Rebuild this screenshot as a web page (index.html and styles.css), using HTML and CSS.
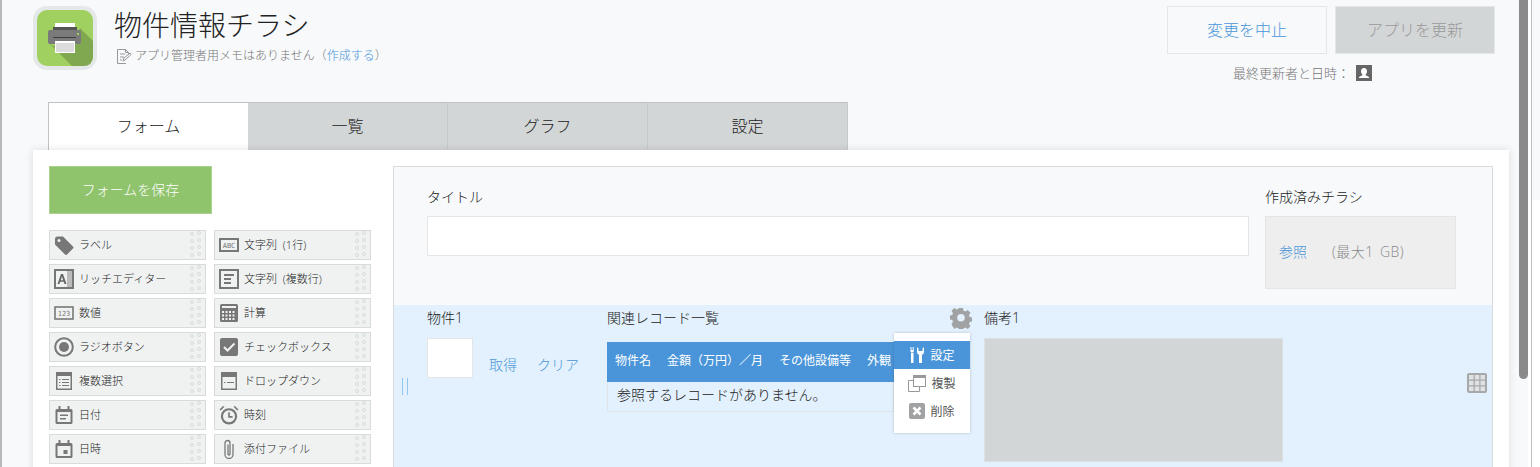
FILE: index.html
```html
<!doctype html>
<html lang="ja">
<head>
	<meta charset="utf-8">
	<title>物件情報チラシ</title>
	<link rel="stylesheet" href="styles.css">
</head>
<body>
	<svg class="defs" width="0" height="0">
		<symbol id="grip" viewBox="0 0 14 30">
			<g fill="none" stroke="#d9dcdc" stroke-width="1">
				<circle cx="3" cy="4" r="1.5"/><circle cx="10" cy="3" r="1.5"/>
				<circle cx="3" cy="11" r="1.5"/><circle cx="10" cy="10" r="1.5"/>
				<circle cx="3" cy="18" r="1.5"/><circle cx="10" cy="17" r="1.5"/>
				<circle cx="3" cy="25" r="1.5"/><circle cx="10" cy="24" r="1.5"/>
			</g>
		</symbol>
	</svg>

	<header class="app-header">
		<div class="app-icon">
			<svg viewBox="0 0 56 56" width="56" height="56">
				<rect width="56" height="56" rx="10" fill="#a0d060"/>
				<path d="M11 32 L35 56 H46 Q56 56 56 46 V31 L43 18 L38 30 L16 36 Z" fill="#80a850"/>
				<rect x="18" y="13" width="20" height="8" fill="#fff"/>
				<rect x="16" y="17" width="24" height="3" fill="#555"/>
				<rect x="11" y="20" width="33" height="14" rx="2" fill="#7a7a7a"/>
				<rect x="16" y="27" width="23" height="1" fill="#3f3f3f"/>
				<rect x="40" y="23" width="2" height="2" fill="#a0d060"/>
				<rect x="18" y="31" width="20" height="12" fill="#fff"/>
				<rect x="19" y="33" width="18" height="9" fill="#dcdcdc"/>
			</svg>
		</div>
		<div class="app-title">
			<h1>物件情報チラシ</h1>
			<p class="app-memo">
				<svg width="16" height="16" viewBox="0 0 16 16" fill="none" stroke="#999"><path d="M10 15.500H1.500V1.500h8l3 3V7"/><path d="M9.500 1.500v3h3M4 6h5M4 9h4M4 12h2"/><path d="M7 13l1-3 6-5 1 1.500-6 5.500z"/></svg>
				アプリ管理者用メモはありません（<a>作成する</a>）
			</p>
		</div>
		<div class="app-actions">
			<div class="action-buttons">
				<button class="btn-cancel">変更を中止</button>
				<button class="btn-update">アプリを更新</button>
			</div>
			<p class="app-updated">最終更新者と日時：
				<svg width="16" height="16" viewBox="0 0 16 16"><rect width="16" height="16" fill="#666"/><path d="M8 3c-2 0-3 1.400-3 3.200 0 1.300.5 2.300 1.300 3v1L3 12v1h10v-1l-3.300-1.800v-1c.8-.7 1.300-1.700 1.300-3C11 4.400 10 3 8 3z" fill="#fff"/></svg>
			</p>
		</div>
	</header>

	<nav class="tabs">
		<a class="tab tab-active">フォーム</a>
		<a class="tab">一覧</a>
		<a class="tab">グラフ</a>
		<a class="tab">設定</a>
	</nav>

	<main class="panel">
		<aside class="palette">
			<button class="btn-save">フォームを保存</button>
			<ul class="palette-list">
				<li class="palette-item"><svg class="palette-icon" viewBox="0 0 20 20"><path d="M1 4a2.500 2.500 0 0 1 2.500-2.500H9L19 11.500a1.500 1.500 0 0 1 0 2l-6 6a1.500 1.500 0 0 1-2 0L1 9.500z" fill="#777"/><circle cx="5" cy="5.500" r="1.500" fill="#f0f2f2"/></svg>ラベル<svg class="grip"><use href="#grip"/></svg></li>
				<li class="palette-item"><svg class="palette-icon" viewBox="0 0 20 20"><rect x="1" y="4" width="18" height="12" fill="none" stroke="#777" stroke-width="2"/><text x="10" y="13" text-anchor="middle" class="icon-text">ABC</text></svg>文字列 (1行)<svg class="grip"><use href="#grip"/></svg></li>
				<li class="palette-item"><svg class="palette-icon" viewBox="0 0 20 20"><rect x="1" y="1" width="18" height="18" fill="none" stroke="#777" stroke-width="2"/><rect x="13" y="2" width="5" height="16" fill="#bbb"/><path d="M3.500 15L7 5h2l3.500 10h-2l-.7-2.200H6.200L5.500 15zM6.800 11.300h2.400L8 7.500z" fill="#666"/></svg>リッチエディター<svg class="grip"><use href="#grip"/></svg></li>
				<li class="palette-item"><svg class="palette-icon" viewBox="0 0 20 20"><rect x="1" y="1" width="18" height="18" fill="none" stroke="#777" stroke-width="2"/><path d="M5 5h10v2H5zM5 9h7v2H5zM5 13h7v2H5z" fill="#777"/></svg>文字列 (複数行)<svg class="grip"><use href="#grip"/></svg></li>
				<li class="palette-item"><svg class="palette-icon" viewBox="0 0 20 20"><rect x="1" y="4" width="18" height="12" fill="none" stroke="#777" stroke-width="1.600"/><text x="10" y="13" text-anchor="middle" class="icon-text">123</text></svg>数値<svg class="grip"><use href="#grip"/></svg></li>
				<li class="palette-item"><svg class="palette-icon" viewBox="0 0 20 20"><rect x="1" y="1" width="18" height="18" rx="1.500" fill="#777"/><rect x="3" y="3" width="14" height="2" fill="#f0f2f2"/><path d="M3 8h2v2H3zM6.500 8h2v2h-2zM10 8h2v2h-2zM13.500 8h2v2h-2zM3 11.500h2v2H3zM6.500 11.500h2v2h-2zM10 11.500h2v2h-2zM13.500 11.500h2v2h-2zM3 15h2v2H3zM6.500 15h2v2h-2zM10 15h2v2h-2zM13.500 15h2v2h-2z" fill="#f0f2f2"/></svg>計算<svg class="grip"><use href="#grip"/></svg></li>
				<li class="palette-item"><svg class="palette-icon" viewBox="0 0 20 20"><circle cx="10" cy="10" r="8.800" fill="none" stroke="#777" stroke-width="2"/><circle cx="10" cy="10" r="5" fill="#777"/></svg>ラジオボタン<svg class="grip"><use href="#grip"/></svg></li>
				<li class="palette-item"><svg class="palette-icon" viewBox="0 0 20 20"><rect x="1" y="1" width="18" height="18" rx="2" fill="#777"/><path d="M5 10l3.500 3.500L15.500 6.500" fill="none" stroke="#f0f2f2" stroke-width="2"/></svg>チェックボックス<svg class="grip"><use href="#grip"/></svg></li>
				<li class="palette-item"><svg class="palette-icon" viewBox="0 0 20 20"><rect x="2" y="1" width="16" height="18" fill="#777"/><rect x="3.500" y="5" width="13" height="12.500" fill="#f0f2f2"/><path d="M5 8h1.500v1H5zM8 8h7v1H8zM5 11h1.500v1H5zM8 11h7v1H8zM5 14h1.500v1H5zM8 14h7v1H8z" fill="#777"/></svg>複数選択<svg class="grip"><use href="#grip"/></svg></li>
				<li class="palette-item"><svg class="palette-icon" viewBox="0 0 20 20"><rect x="2" y="1" width="16" height="18" fill="#777"/><rect x="3.500" y="6" width="13" height="11.500" fill="#f0f2f2"/><path d="M5 11h1.500v1H5zM8 11h7v1H8z" fill="#777"/></svg>ドロップダウン<svg class="grip"><use href="#grip"/></svg></li>
				<li class="palette-item"><svg class="palette-icon" viewBox="0 0 20 20"><path d="M3 4h14a1.500 1.500 0 0 1 1.500 1.500V17.500A1.500 1.500 0 0 1 17 19H3a1.500 1.500 0 0 1-1.500-1.500V5.500A1.500 1.500 0 0 1 3 4z" fill="#777"/><rect x="4.500" y="1" width="2" height="4" fill="#777"/><rect x="13.500" y="1" width="2" height="4" fill="#777"/><rect x="3.500" y="7" width="13" height="10" fill="#f0f2f2"/><path d="M6 9.500h8v1.500H6zM6 13h6v1.500H6z" fill="#777"/></svg>日付<svg class="grip"><use href="#grip"/></svg></li>
				<li class="palette-item"><svg class="palette-icon" viewBox="0 0 22 22"><circle cx="11" cy="12.500" r="7.800" fill="none" stroke="#777" stroke-width="2.400"/><path d="M11 8v5h4" fill="none" stroke="#777" stroke-width="1.800"/><path d="M.5 5L4.500 1l1.500 1L2 6zM21.500 5L17.500 1l-1.500 1L20 6z" fill="#777"/></svg>時刻<svg class="grip"><use href="#grip"/></svg></li>
				<li class="palette-item"><svg class="palette-icon" viewBox="0 0 20 20"><path d="M3 4h14a1.500 1.500 0 0 1 1.500 1.500V17.500A1.500 1.500 0 0 1 17 19H3a1.500 1.500 0 0 1-1.500-1.500V5.500A1.500 1.500 0 0 1 3 4z" fill="#777"/><rect x="4.500" y="1" width="2" height="4" fill="#777"/><rect x="13.500" y="1" width="2" height="4" fill="#777"/><rect x="3.500" y="7" width="13" height="10" fill="#f0f2f2"/><rect x="9.500" y="11" width="4" height="4" fill="#777"/></svg>日時<svg class="grip"><use href="#grip"/></svg></li>
				<li class="palette-item"><svg class="palette-icon" viewBox="0 0 20 20"><path d="M14 5v10.500a4 4 0 0 1-8 0V4a2.500 2.500 0 0 1 5 0v11a1 1 0 0 1-2 0V5.500" fill="none" stroke="#777" stroke-width="1.300"/></svg>添付ファイル<svg class="grip"><use href="#grip"/></svg></li>
			</ul>
		</aside>

		<section class="form-area">
			<div class="form-row">
				<div class="field-title">
					<label class="field-label">タイトル</label>
					<div class="text-input"></div>
				</div>
				<div class="field-file">
					<label class="field-label">作成済みチラシ</label>
					<div class="file-box"><a class="link">参照</a><span class="file-limit">(最大1 GB)</span></div>
				</div>
			</div>

			<div class="form-row-active">
				<span class="drag-handle"></span>
				<div class="field-lookup">
					<label class="field-label-sm">物件1</label>
					<div class="lookup-body">
						<div class="lookup-input"></div>
						<a class="link">取得</a>
						<a class="link">クリア</a>
					</div>
				</div>
				<div class="field-related">
					<label class="field-label-sm">関連レコード一覧</label>
					<div class="related-head">
						<span>物件名</span><span>金額（万円）／月</span><span>その他設備等</span><span>外観</span>
					</div>
					<div class="related-empty">参照するレコードがありません。</div>
					<svg class="gear" width="22" height="22" viewBox="0 0 22 22">
						<path fill="#a0a2a3" fill-rule="evenodd" d="M9 1h4l.6 2.800 1.700.7L17.700 3l2.800 2.800-1.500 2.400.7 1.700 2.800.6v4l-2.800.6-.7 1.700 1.500 2.400-2.800 2.800-2.400-1.500-1.700.7-.6 2.800H9l-.6-2.800-1.700-.7-2.400 1.500L1.500 17.200 3 14.800l-.7-1.700L0 12.500v-4l2.300-.6.700-1.700L1.500 3.800 4.300 1l2.400 1.500 1.700-.7zM11 7a3.800 3.800 0 1 0 0 7.600A3.800 3.800 0 0 0 11 7z"/>
					</svg>
					<ul class="field-menu">
						<li class="menu-item menu-active"><svg width="16" height="18" viewBox="0 0 16 18" fill="#fff"><path d="M2 7h2.500v10H2zM1.500 1h1v3h1.200V1h1v4.500a1 1 0 0 1-1 1H2.500a1 1 0 0 1-1-1zM10 9h3v8h-3zM8 1v4.500a3.500 3.500 0 0 0 7 0V1l-1.500 1.500V5h-4V2.500z"/></svg>設定</li>
						<li class="menu-item"><svg width="18" height="18" viewBox="0 0 18 18" fill="none" stroke="#999"><path d="M5 6.500H.5v11h11V13"/><rect x="5.500" y="1.500" width="12" height="11" fill="#fff"/><path d="M5.500 3h12" stroke-width="2"/></svg>複製</li>
						<li class="menu-item"><svg width="16" height="16" viewBox="0 0 16 16"><rect width="16" height="16" rx="2" fill="#a0a2a3"/><path d="M4.500 4.500l7 7M11.500 4.500l-7 7" stroke="#fff" stroke-width="2.500"/></svg>削除</li>
					</ul>
				</div>
				<div class="field-note">
					<label class="field-label-sm">備考1</label>
					<div class="note-box"></div>
				</div>
				<svg class="row-grid" width="20" height="20" viewBox="0 0 20 20"><rect width="20" height="20" rx="2" fill="#a6a8a9"/><path d="M2 2h4.500v4.500H2zM7.800 2h4.500v4.500H7.800zM13.500 2H18v4.500h-4.500zM2 7.800h4.500v4.500H2zM7.800 7.800h4.500v4.500H7.800zM13.500 7.800H18v4.500h-4.500zM2 13.500h4.500V18H2zM7.800 13.500h4.500V18H7.800zM13.500 13.500H18V18h-4.500z" fill="#dfe2e4"/></svg>
			</div>
		</section>
	</main>

	<div class="scrollbar">
		<div class="scroll-thumb"></div>
		<div class="scroll-side"></div>
	</div>
</body>
</html>
```

FILE: styles.css
```css
* {
	box-sizing: border-box;
}
html,
body {
	height: 467px;
	overflow: hidden;
}
body {
	margin: 0;
	background: #f7f9fb;
	border-left: 2px solid #b5b7b8;
	color: #222;
	font-family: "Open Sans", "Noto Sans CJK JP", sans-serif;
	font-size: 14px;
	font-weight: 300;
}
p,
h1,
ul {
	margin: 0;
	padding: 0;
}
ul {
	list-style: none;
}
button {
	font-family: inherit;
	font-weight: inherit;
}
.defs {
	position: absolute;
}
.link {
	color: #4a95d9;
}

/* header */
.app-header {
	display: flex;
	height: 102px;
	padding: 6px 0 0 31px;
}
.app-icon {
	width: 64px;
	height: 64px;
	padding: 4px;
	background: #e5e8e9;
	border-radius: 14px;
}
.app-icon svg {
	display: block;
}
.app-title {
	margin-left: 17px;
	flex: 1;
}
.app-title h1 {
	font-size: 28px;
	font-weight: 300;
	line-height: 38px;
}
.app-memo {
	display: flex;
	align-items: center;
	margin-top: 3px;
	color: #777;
	font-size: 12px;
	line-height: 18px;
}
.app-memo svg {
	margin: 0 3px 0 2px;
}
.app-memo a {
	color: #4a95d9;
}
.app-actions {
	width: 328px;
	margin-right: 45px;
}
.action-buttons {
	display: flex;
	gap: 8px;
}
.btn-cancel,
.btn-update {
	width: 160px;
	height: 48px;
	padding-bottom: 3px;
	font-size: 16px;
	border: 1px solid #e3e7e8;
}
.btn-cancel {
	background: #f7f9fb;
	color: #4a95d9;
}
.btn-update {
	background: #d3d6d7;
	color: #999;
}
.app-updated {
	display: flex;
	align-items: center;
	justify-content: center;
	gap: 6px;
	margin-top: 11px;
	padding-right: 57px;
	color: #777;
	font-size: 13px;
	line-height: 16px;
}

/* tabs */
.tabs {
	display: flex;
	height: 48px;
	margin-left: 46px;
}
.tab {
	width: 200px;
	padding-top: 11px;
	background: #d3d6d7;
	border-top: 1px solid #bfc2c3;
	border-right: 1px solid #c6c9ca;
	font-size: 16px;
	line-height: 24px;
	text-align: center;
}
.tab-active {
	background: #fff;
	border-left: 1px solid #bfc2c3;
	border-right: 0;
}

/* panel */
.panel {
	display: flex;
	width: 1476px;
	height: 330px;
	margin-left: 31px;
	padding: 16px 16px 0;
	background: #fff;
	box-shadow: 0 0 8px rgba(0, 0, 0, .12);
	position: relative;
}
.palette {
	width: 344px;
}
.btn-save {
	display: block;
	width: 163px;
	height: 48px;
	padding-bottom: 3px;
	background: #8fc36c;
	border: 1px solid #a9d38e;
	color: #fff;
	font-size: 14px;
}
.palette-list {
	display: grid;
	grid-template-columns: 157px 157px;
	grid-auto-rows: 30px;
	gap: 4px 8px;
	margin-top: 16px;
}
.palette-item {
	display: flex;
	align-items: center;
	padding: 0 4px;
	background: #f0f2f2;
	border: 1px solid #d8dbdb;
	font-size: 11px;
	line-height: 26px;
	word-spacing: 3px;
	white-space: nowrap;
}
.palette-icon {
	flex: none;
	width: 20px;
	height: 20px;
	margin: 0 5px 0 0;
}
.icon-text {
	fill: #777;
	font-family: "DejaVu Sans Mono", monospace;
	font-size: 7px;
}
.grip {
	flex: none;
	width: 14px;
	height: 30px;
	margin: 0 -2px 0 auto;
}

/* form */
.form-area {
	flex: 1;
	background: #f7f9fb;
	border: 1px solid #d8dadb;
	border-width: 1px 1px 0;
}
.form-row {
	display: flex;
	height: 138px;
	padding: 18px 0 0 33px;
}
.field-label {
	display: block;
	height: 31px;
	font-size: 14px;
	line-height: 24px;
}
.field-title {
	width: 838px;
}
.text-input {
	width: 822px;
	height: 40px;
	background: #fff;
	border: 1px solid #e3e5e6;
}
.file-box {
	display: flex;
	align-items: center;
	width: 191px;
	height: 73px;
	padding: 0 0 4px 13px;
	background: #eee;
	border: 1px solid #e3e5e6;
}
.file-limit {
	margin-left: 25px;
	color: #888;
	letter-spacing: .5px;
	word-spacing: 2px;
}
.form-row-active {
	display: flex;
	position: relative;
	height: 162px;
	padding: 0 0 0 33px;
	background: #e2f1fd;
}
.field-label-sm {
	display: block;
	height: 33px;
	padding-top: 3px;
	font-size: 14px;
	line-height: 20px;
}
.drag-handle {
	position: absolute;
	left: 8px;
	top: 73px;
	width: 6px;
	height: 17px;
	border: 1px solid #93c6ee;
	border-width: 0 1px;
}
.field-lookup {
	width: 180px;
}
.lookup-body {
	display: flex;
	gap: 20px;
}
.lookup-input {
	width: 46px;
	height: 40px;
	margin-right: -4px;
	background: #fff;
	border: 1px solid #e3e5e6;
}
.lookup-body .link {
	margin-top: 17px;
	font-size: 14px;
	line-height: 20px;
}
.field-related {
	position: relative;
	width: 377px;
}
.related-head {
	display: flex;
	gap: 16px;
	width: 287px;
	height: 40px;
	margin-top: 4px;
	padding-left: 8px;
	background: #4a95d9;
	color: #fff;
	font-size: 12px;
	font-weight: 400;
	line-height: 38px;
	white-space: nowrap;
	overflow: hidden;
}
.related-empty {
	width: 287px;
	height: 30px;
	padding-left: 9px;
	border: 1px solid #dfe4e8;
	border-top: 0;
	line-height: 26px;
}
.gear {
	position: absolute;
	left: 343px;
	top: 2px;
}
.field-menu {
	position: absolute;
	left: 287px;
	top: 28px;
	width: 76px;
	height: 100px;
	padding-top: 8px;
	background: #fff;
	box-shadow: 0 0 3px rgba(0, 0, 0, .2);
}
.menu-item {
	display: flex;
	align-items: center;
	justify-content: center;
	gap: 5px;
	height: 28px;
	color: #555;
	font-size: 12px;
	font-weight: 400;
}
.menu-active {
	background: #4a95d9;
	color: #fff;
}
.note-box {
	width: 299px;
	height: 124px;
	background: #d3d6d7;
	border: 1px solid #dde1e3;
}
.row-grid {
	position: absolute;
	right: 5px;
	top: 68px;
}

/* scrollbar */
.scrollbar {
	position: fixed;
	top: 0;
	right: 0;
	bottom: 0;
	display: flex;
	width: 21px;
}
.scroll-thumb {
	width: 9px;
	height: 379px;
	background: #8a8a8a;
	border-radius: 0 0 5px 5px;
}
.scroll-side {
	flex: 1;
	margin-left: 3px;
	border-left: 1px solid #bdbfc0;
	background: linear-gradient(#f7f9fb 200px, #fff 200px);
	box-shadow: -3px 0 0 #fff;
}
```
